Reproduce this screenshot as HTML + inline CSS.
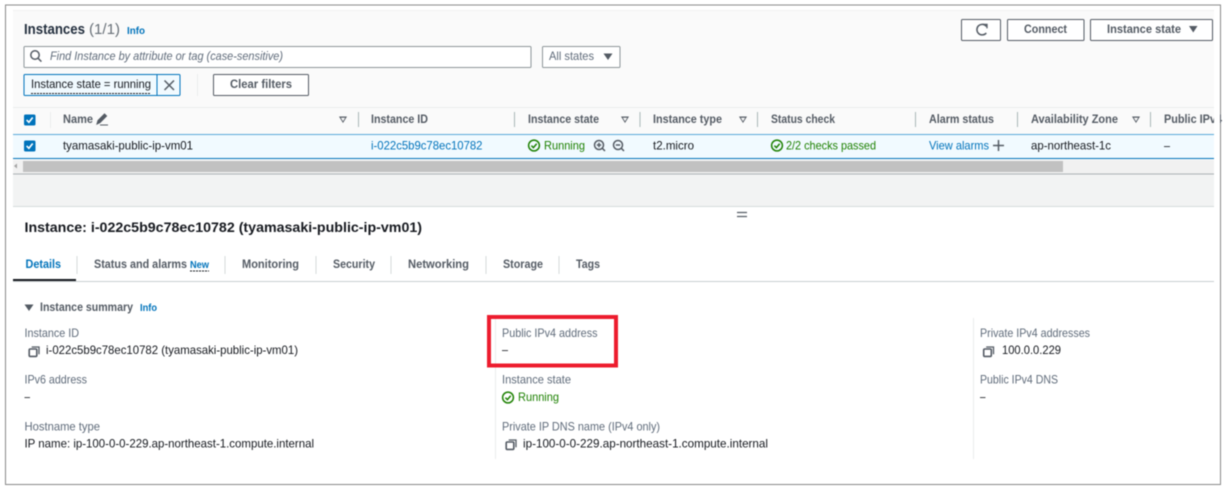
<!DOCTYPE html>
<html><head><meta charset="utf-8"><title>Instances</title>
<style>
html,body{margin:0;padding:0;background:#fff;width:1226px;height:488px;overflow:hidden}
svg{display:block;filter:blur(.4px)}
text{font-family:"Liberation Sans",sans-serif;font-size:12px;fill:#16191f}
.h{font-weight:bold;fill:#545b64}
.l{fill:#5f6b7a}
.a{fill:#0073bb}
.g{fill:#1d8102}
.i{fill:none;stroke:#545b64;stroke-width:1.5}
.d{stroke:#aab7b8;stroke-width:1}
.b{fill:#fff;stroke:#545b64;stroke-width:1}
</style></head><body>
<svg width="1226" height="488" viewBox="0 0 1226 488" xmlns="http://www.w3.org/2000/svg">
<defs>
<g id="copy"><rect x="0.7" y="3" width="7.6" height="7.4" rx="1" fill="none" stroke="#545b64" stroke-width="1.6"/><path d="M3.2 1h7.3v7.2" fill="none" stroke="#545b64" stroke-width="1.3"/></g>
<g id="ok"><circle cx="6" cy="6" r="5.4" fill="none" stroke="#1d8102" stroke-width="1.5"/><path d="M3.4 6.1l2 2 3.3-3.8" fill="none" stroke="#1d8102" stroke-width="1.5"/></g>
<path id="tri" d="M0 0h8l-4 6.500z M1.800 1.200L4 4.800 6.200 1.200z" fill="#545b64" fill-rule="evenodd"/>
<g id="cb"><rect width="11.500" height="11" rx="1.500" fill="#0073bb"/><path d="M2.600 5.400l2.300 2.400 3.800-4.800" fill="none" stroke="#fff" stroke-width="1.600"/></g>
</defs>

<rect x="5.500" y="5" width="1215" height="479.500" fill="#fff" stroke="#8a8a8a" stroke-width="1"/>
<rect x="13" y="10" width="1201" height="164" fill="#fafafa"/>
<rect x="13" y="10" width="1201" height="1" fill="#f0f0f0"/>

<!-- Header -->
<text x="24" y="34" style="font-size:14.500px;font-weight:bold;fill:#232f3e" textLength="61" lengthAdjust="spacingAndGlyphs">Instances</text>
<text x="89" y="34" style="font-size:14.500px;fill:#687078" textLength="31" lengthAdjust="spacingAndGlyphs">(1/1)</text>
<text x="127" y="34" style="font-size:10.500px;font-weight:bold" class="a" textLength="18" lengthAdjust="spacingAndGlyphs">Info</text>

<rect x="961.500" y="19.500" width="39" height="21" class="b" rx="1"/>
<path d="M986.500 26.500A5.300 5.300 0 1 0 986.300 33" fill="none" stroke="#545b64" stroke-width="1.500"/><path d="M983 24.400h4v4" fill="none" stroke="#545b64" stroke-width="1.300"/>
<rect x="1007.500" y="19.500" width="76.500" height="21" class="b" rx="1"/>
<text x="1024" y="33" class="h" textLength="43" lengthAdjust="spacingAndGlyphs">Connect</text>
<rect x="1090.500" y="19.500" width="122" height="21" class="b" rx="1"/>
<text x="1107" y="33" class="h" textLength="74" lengthAdjust="spacingAndGlyphs">Instance state</text>
<path d="M1189 26h8.500l-4.250 6.500z" fill="#545b64"/>

<!-- Search -->
<rect x="24" y="46.500" width="507" height="21" fill="#fff" stroke="#8d9699" rx="1"/>
<circle cx="35" cy="55" r="4.200" class="i"/><path d="M38 58.200l3.400 3.400" class="i"/>
<text x="50" y="60" class="l" style="font-style:italic" textLength="233" lengthAdjust="spacingAndGlyphs">Find Instance by attribute or tag (case-sensitive)</text>
<rect x="542.500" y="46.500" width="77.500" height="21" fill="#fff" stroke="#8d9699" rx="1"/>
<text x="549" y="60" class="l" textLength="45" lengthAdjust="spacingAndGlyphs">All states</text>
<path d="M603.500 53.500h9l-4.500 6.500z" fill="#545b64"/>

<!-- Filter token -->
<rect x="24" y="74.500" width="156" height="21" fill="#f1faff" stroke="#0073bb" rx="1"/>
<path d="M157 74.500v21" stroke="#0073bb"/>
<text x="31" y="88" textLength="120" lengthAdjust="spacingAndGlyphs">Instance state = running</text>
<path d="M31 93.500h120" stroke="#16191f" stroke-dasharray="2 1"/>
<path d="M164.500 80.500l9.500 9.500M174 80.500l-9.500 9.500" stroke="#545b64" stroke-width="1.500" fill="none"/>
<path d="M197.500 74v22" stroke="#eaeded"/>
<rect x="213.500" y="74.500" width="95" height="21" class="b" rx="1"/>
<text x="230" y="88" class="h" textLength="62" lengthAdjust="spacingAndGlyphs">Clear filters</text>

<!-- Table header -->
<rect x="13" y="107" width="1201" height="1" fill="#eaeded"/>
<use href="#cb" x="24" y="114.500"/>
<path d="M50.500 112v16" stroke="#eaeded"/>
<text x="63" y="123" class="h" textLength="30" lengthAdjust="spacingAndGlyphs">Name</text>
<path d="M97 124l1-3.500 6.500-6.500 2 2-6.500 6.500zM100 125h8" fill="#545b64" stroke="#545b64" stroke-width="1.100"/>
<use href="#tri" x="339" y="116.500"/><path d="M358.500 112v15" class="d"/>
<text x="371" y="123" class="h" textLength="57" lengthAdjust="spacingAndGlyphs">Instance ID</text>
<path d="M514.500 112v15" class="d"/>
<text x="528" y="123" class="h" textLength="71" lengthAdjust="spacingAndGlyphs">Instance state</text>
<use href="#tri" x="621" y="116.500"/><path d="M640 112v15" class="d"/>
<text x="653" y="123" class="h" textLength="69" lengthAdjust="spacingAndGlyphs">Instance type</text>
<use href="#tri" x="739" y="116.500"/><path d="M757.500 112v15" class="d"/>
<text x="771" y="123" class="h" textLength="64" lengthAdjust="spacingAndGlyphs">Status check</text>
<path d="M915.500 112v15" class="d"/>
<text x="929" y="123" class="h" textLength="65" lengthAdjust="spacingAndGlyphs">Alarm status</text>
<path d="M1017.500 112v15" class="d"/>
<text x="1031" y="123" class="h" textLength="87" lengthAdjust="spacingAndGlyphs">Availability Zone</text>
<use href="#tri" x="1132" y="116.500"/><path d="M1150.500 112v15" class="d"/>
<text x="1164" y="123" class="h" textLength="58" lengthAdjust="spacingAndGlyphs">Public IPv4</text>

<!-- Row -->
<rect x="13" y="134" width="1201" height="25" fill="#f1faff"/>
<rect x="13" y="134" width="1201" height="1" fill="#5aa9d8"/>
<rect x="13" y="158" width="1201" height="1" fill="#0073bb"/>
<use href="#cb" x="24" y="140.500"/>
<text x="63" y="149.500" textLength="130" lengthAdjust="spacingAndGlyphs">tyamasaki-public-ip-vm01</text>
<text x="371" y="149.500" class="a" textLength="111.500" lengthAdjust="spacingAndGlyphs">i-022c5b9c78ec10782</text>
<use href="#ok" x="528" y="139.500"/>
<text x="544" y="149.500" class="g" textLength="41" lengthAdjust="spacingAndGlyphs">Running</text>
<circle cx="599" cy="145" r="4.500" class="i"/><path d="M602.200 148.200l2.800 2.800M596.800 145h4.400M599 142.800v4.400" class="i"/>
<circle cx="618" cy="145" r="4.500" class="i"/><path d="M621.200 148.200l2.800 2.800M615.800 145h4.400" class="i"/>
<text x="653" y="149.500" textLength="41" lengthAdjust="spacingAndGlyphs">t2.micro</text>
<use href="#ok" x="771" y="139.500"/>
<text x="786" y="149.500" class="g" textLength="90" lengthAdjust="spacingAndGlyphs">2/2 checks passed</text>
<text x="929" y="149.500" class="a" textLength="60" lengthAdjust="spacingAndGlyphs">View alarms</text>
<path d="M993 145.500h11M998.500 140v11" stroke="#545b64" stroke-width="1.500"/>
<text x="1031" y="149.500" textLength="80" lengthAdjust="spacingAndGlyphs">ap-northeast-1c</text>
<text x="1164" y="149.500" textLength="6" lengthAdjust="spacingAndGlyphs">–</text>
<rect x="1214" y="100" width="6" height="80" fill="#fff"/>

<!-- Scrollbar -->
<rect x="13" y="160" width="1201" height="13" fill="#f1f1f1"/>
<rect x="23" y="161" width="1040" height="11" fill="#c1c1c1"/>
<path d="M17 163.500v5l-3-2.500z" fill="#a3a3a3"/>
<rect x="13" y="173" width="1201" height="33" fill="#f2f3f3"/>
<rect x="13" y="173.500" width="1201" height="1" fill="#aab0b3"/>
<rect x="13" y="206" width="1201" height="1" fill="#d5dbdb"/>
<path d="M737 212.500h10M737 216.500h10" stroke="#545b64" stroke-width="1.300"/>

<!-- Detail title -->
<text x="24.500" y="232" style="font-size:14px;font-weight:bold" textLength="397.500" lengthAdjust="spacingAndGlyphs">Instance: i-022c5b9c78ec10782 (tyamasaki-public-ip-vm01)</text>

<!-- Tabs -->
<rect x="13" y="281" width="1201" height="1" fill="#c9cfd1"/>
<rect x="13" y="279" width="63" height="2" fill="#16191f"/>
<text x="25.500" y="268" class="h" style="fill:#0073bb" textLength="35.500" lengthAdjust="spacingAndGlyphs">Details</text>
<path d="M77 256v18M225 256v18M316 256v18M391 256v18M486 256v18M559 256v18" stroke="#d5dbdb"/>
<text x="94" y="268" class="h" textLength="93" lengthAdjust="spacingAndGlyphs">Status and alarms</text>
<text x="190" y="268" style="font-size:10.500px;font-weight:bold" class="a" textLength="19" lengthAdjust="spacingAndGlyphs">New</text>
<path d="M190 271h19" stroke="#16191f" stroke-dasharray="2 1"/>
<text x="242" y="268" class="h" textLength="57" lengthAdjust="spacingAndGlyphs">Monitoring</text>
<text x="333" y="268" class="h" textLength="42" lengthAdjust="spacingAndGlyphs">Security</text>
<text x="408" y="268" class="h" textLength="61" lengthAdjust="spacingAndGlyphs">Networking</text>
<text x="503" y="268" class="h" textLength="40" lengthAdjust="spacingAndGlyphs">Storage</text>
<text x="576" y="268" class="h" textLength="24" lengthAdjust="spacingAndGlyphs">Tags</text>

<!-- Summary -->
<path d="M24.500 304.500h9l-4.500 6.500z" fill="#545b64"/>
<text x="40" y="311" class="h" style="font-size:11.500px" textLength="93" lengthAdjust="spacingAndGlyphs">Instance summary</text>
<text x="140" y="311" style="font-size:10px;font-weight:bold" class="a" textLength="17" lengthAdjust="spacingAndGlyphs">Info</text>

<path d="M495.500 318v141M973.500 318v141" stroke="#eaeded"/>

<text x="24.500" y="337" class="l" textLength="54.500" lengthAdjust="spacingAndGlyphs">Instance ID</text>
<use href="#copy" x="28.500" y="346"/>
<text x="46" y="354" textLength="252" lengthAdjust="spacingAndGlyphs">i-022c5b9c78ec10782 (tyamasaki-public-ip-vm01)</text>
<text x="24.500" y="383.500" class="l" textLength="62.500" lengthAdjust="spacingAndGlyphs">IPv6 address</text>
<text x="24.500" y="400.500" textLength="5.500" lengthAdjust="spacingAndGlyphs">–</text>
<text x="24.500" y="430.500" class="l" textLength="75.500" lengthAdjust="spacingAndGlyphs">Hostname type</text>
<text x="24.500" y="447.500" textLength="289.500" lengthAdjust="spacingAndGlyphs">IP name: ip-100-0-0-229.ap-northeast-1.compute.internal</text>

<text x="502" y="337" class="l" textLength="95.500" lengthAdjust="spacingAndGlyphs">Public IPv4 address</text>
<text x="502" y="353.500" textLength="6" lengthAdjust="spacingAndGlyphs">–</text>
<text x="502" y="383.500" class="l" textLength="69" lengthAdjust="spacingAndGlyphs">Instance state</text>
<use href="#ok" x="502" y="391.500"/>
<text x="518" y="401" class="g" textLength="41" lengthAdjust="spacingAndGlyphs">Running</text>
<text x="502" y="430.500" class="l" textLength="158" lengthAdjust="spacingAndGlyphs">Private IP DNS name (IPv4 only)</text>
<use href="#copy" x="505.500" y="439"/>
<text x="523" y="447.500" textLength="245" lengthAdjust="spacingAndGlyphs">ip-100-0-0-229.ap-northeast-1.compute.internal</text>

<text x="980" y="337" class="l" textLength="110" lengthAdjust="spacingAndGlyphs">Private IPv4 addresses</text>
<use href="#copy" x="983" y="346"/>
<text x="1002" y="354" textLength="59" lengthAdjust="spacingAndGlyphs">100.0.0.229</text>
<text x="980" y="383.500" class="l" textLength="78" lengthAdjust="spacingAndGlyphs">Public IPv4 DNS</text>
<text x="980" y="400.500" textLength="5.500" lengthAdjust="spacingAndGlyphs">–</text>

<rect x="489" y="317" width="127" height="48.500" fill="none" stroke="#ed1c2e" stroke-width="4"/>
</svg>
</body></html>
